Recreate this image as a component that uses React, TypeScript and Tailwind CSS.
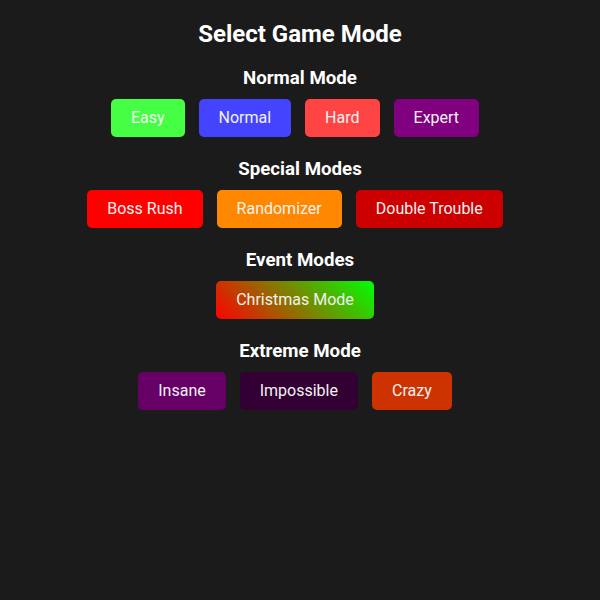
const sections: { title: string; modes: { label: string; className: string }[] }[] = [
  {
    title: "Normal Mode",
    modes: [
      { label: "Easy", className: "bg-[#44ff44]" },
      { label: "Normal", className: "bg-[#4444ff]" },
      { label: "Hard", className: "bg-[#ff4444]" },
      { label: "Expert", className: "bg-[#800080]" },
    ],
  },
  {
    title: "Special Modes",
    modes: [
      { label: "Boss Rush", className: "bg-[#ff0000]" },
      { label: "Randomizer", className: "bg-[#ff8800]" },
      { label: "Double Trouble", className: "bg-[#cc0000]" },
    ],
  },
  {
    title: "Event Modes",
    modes: [{ label: "Christmas Mode", className: "bg-[linear-gradient(45deg,#ff0000,#00ff00)]" }],
  },
  {
    title: "Extreme Mode",
    modes: [
      { label: "Insane", className: "bg-[#660066]" },
      { label: "Impossible", className: "bg-[#330033]" },
      { label: "Crazy", className: "bg-[#cc3300]" },
    ],
  },
];

export default function App() {
  return (
    <div className="min-h-[600px] w-full bg-[#1b1b1b] font-['Roboto',sans-serif] text-white">
      <div className="flex flex-col items-center pt-[19px]">
        <h1 className="text-[24px] font-bold leading-[30px]">Select Game Mode</h1>
        <div className="mt-[18px] flex flex-col items-center gap-[21px]">
          {sections.map((section) => (
            <section key={section.title} className="flex flex-col items-center">
              <h2 className="text-[18.72px] font-bold leading-[22px]">{section.title}</h2>
              <div className="mt-[10px] flex gap-[14px] pr-[10px]">
                {section.modes.map((mode) => (
                  <button
                    key={mode.label}
                    type="button"
                    className={`h-[38px] rounded-[5px] px-5 text-[16px] leading-[38px] text-[#f2f2f2] ${mode.className}`}
                  >
                    {mode.label}
                  </button>
                ))}
              </div>
            </section>
          ))}
        </div>
      </div>
    </div>
  );
}
